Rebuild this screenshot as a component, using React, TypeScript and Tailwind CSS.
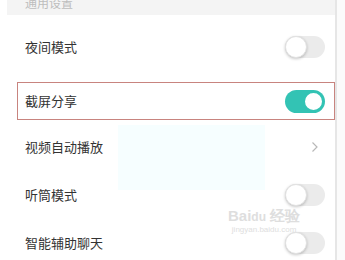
import React from "react";

const Toggle = ({ on }: { on?: boolean }) =>
  on ? (
    <div className="flex h-[23px] w-[40px] items-center justify-end rounded-full bg-[#33c3b4] pr-[1px]">
      <div className="h-[21px] w-[21px] rounded-full border-2 border-[#33c3b4] bg-white" />
    </div>
  ) : (
    <div className="flex h-[22px] w-[40px] items-center rounded-full bg-[#ebebeb]">
      <div className="h-[22px] w-[22px] rounded-full border border-[#e2e2e2] bg-white shadow-[0_1px_3px_rgba(0,0,0,0.22)]" />
    </div>
  );

const Row = ({ label, children }: { label: string; children: React.ReactNode }) => (
  <div className="flex h-[48px] items-center justify-between pl-[25px] pr-[10px]">
    <span className="text-[13px] text-[#333]">{label}</span>
    {children}
  </div>
);

const App = () => {
  return (
    <div
      className="flex h-[260px] w-[345px] overflow-hidden bg-white"
      style={{ fontFamily: '"Noto Sans CJK SC", "Noto Sans", sans-serif' }}
    >
      <div className="relative w-[335px] shrink-0">
        <div className="ml-[7px] flex h-[15px] items-end overflow-hidden bg-[#f4f4f4] pl-[18px]">
          <span className="mb-[6px] text-[12px] leading-none text-[#bdbdbd]">通用设置</span>
        </div>
        <div className="h-[8px]" />
        <Row label="夜间模式">
          <Toggle />
        </Row>
        <div className="h-[11px]" />
        <div className="ml-[17px] flex h-[38px] items-center justify-between border border-[#c8847f] pl-[7px] pr-[9px]">
          <span className="text-[13px] text-[#333]">截屏分享</span>
          <Toggle on />
        </div>
        <div className="h-[3px]" />
        <Row label="视频自动播放">
          <svg width="8" height="12" viewBox="0 0 8 12" className="mr-[6px]">
            <path d="M1.5 1.5 L6 6 L1.5 10.5" fill="none" stroke="#b8b8b8" strokeWidth="1.2" />
          </svg>
        </Row>
        <Row label="听筒模式">
          <Toggle />
        </Row>
        <Row label="智能辅助聊天">
          <Toggle />
        </Row>
        <div className="pointer-events-none absolute left-[118px] top-[125px] h-[65px] w-[147px] bg-[#f6feff]" />
        <div className="pointer-events-none absolute left-[228px] top-[208px] flex flex-col items-center leading-none text-[#dedede]">
          <span className="text-[15px] font-bold" style={{ fontFamily: '"Liberation Sans", sans-serif' }}>
            Bai<span className="text-[12px]">du</span> 经验
          </span>
          <span className="mt-[3px] text-[8px]" style={{ fontFamily: '"Liberation Sans", sans-serif' }}>
            jingyan.baidu.com
          </span>
        </div>
      </div>
      <div className="w-[2px] shrink-0 bg-[#e6e6e6]" />
      <div className="flex-1 bg-[#fbfbfb]" />
    </div>
  );
};

export default App;
